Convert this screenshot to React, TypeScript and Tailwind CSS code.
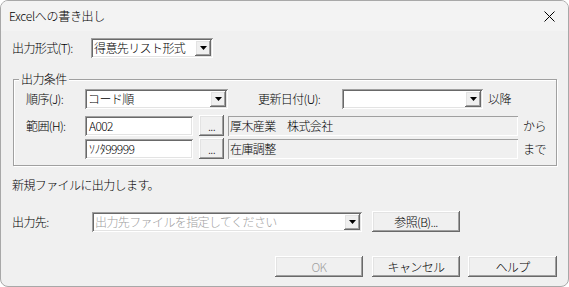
import React from "react";

const font = "font-['Noto_Sans_CJK_JP',sans-serif]";
const sunken =
	"bg-white shadow-[inset_1px_1px_0_#a0a0a0,inset_-1px_-1px_0_#ffffff,inset_2px_2px_0_#696969,inset_-2px_-2px_0_#e3e3e3]";
const raised =
	"bg-[#f0f0f0] shadow-[inset_-1px_-1px_0_#696969,inset_1px_1px_0_#ffffff,inset_-2px_-2px_0_#a0a0a0,inset_2px_2px_0_#e3e3e3]";
const staticBox = "shadow-[inset_1px_1px_0_#a0a0a0,inset_-1px_-1px_0_#ffffff]";

function DropButton() {
	return (
		<div className={`${raised} w-[16px] h-[16px] shrink-0 flex items-center justify-center`}>
			<svg width="7" height="4" viewBox="0 0 7 4">
				<path d="M0 0h7L3.5 4z" fill="#000" />
			</svg>
		</div>
	);
}

function Combo({ value, width, muted }: { value: string; width: string; muted?: boolean }) {
	return (
		<div className={`${sunken} ${width} h-[20px] flex items-center pl-[3px] pr-[2px]`}>
			<span className={`flex-1 whitespace-nowrap leading-[16px] ${muted ? "text-[#a0a0a0]" : "text-black"}`}>
				{value}
			</span>
			<DropButton />
		</div>
	);
}

function Edit({ value }: { value: string }) {
	return (
		<div className={`${sunken} w-[108px] h-[20px] flex items-center pl-[4px] leading-[16px]`}>
			{value}
		</div>
	);
}

function Button({ label, width, disabled }: { label: string; width: string; disabled?: boolean }) {
	return (
		<div
			className={`${raised} ${width} h-[21px] flex items-center justify-center leading-[16px] ${
				disabled ? "text-[#a0a0a0]" : "text-black"
			}`}
		>
			{label}
		</div>
	);
}

export default function App() {
	return (
		<div className={`w-[569px] h-[287px] bg-white text-[12px] text-black font-light ${font}`}>
			<div className="w-[569px] h-[287px] rounded-[8px] border border-[#a8a8a8] bg-[#f0f0f0] overflow-hidden flex flex-col">
				{/* title bar */}
				<div className="h-[30px] shrink-0 bg-[#f3f3f3] flex items-center justify-between pl-[8px] pr-[13px]">
					<span className="text-[12px] tracking-[-0.3px]">Excelへの書き出し</span>
					<svg width="11" height="11" viewBox="0 0 11 11">
						<path d="M0.5 0.5L10.5 10.5M10.5 0.5L0.5 10.5" stroke="#000" strokeWidth="1" />
					</svg>
				</div>

				<div className="flex flex-col pl-[11px] tracking-[-0.6px]">
					<div className="mt-[7px] flex items-center h-[20px]">
						<span className="w-[79px]">出力形式(T):</span>
						<Combo value="得意先リスト形式" width="w-[122px]" />
					</div>

					{/* group box */}
					<div className="relative mt-[21px] ml-[1px] w-[544px] h-[87px] border border-[#a0a0a0] shadow-[inset_1px_1px_0_#fff,1px_1px_0_#fff] pl-[12px]">
						<span className="absolute -top-[9px] left-[5px] bg-[#f0f0f0] px-[2px] leading-[16px]">
							出力条件
						</span>
						<div className="mt-[9px] flex items-center h-[20px]">
							<span className="w-[59px]">順序(J):</span>
							<Combo value="コード順" width="w-[143px]" />
							<span className="ml-[30px] w-[84px]">更新日付(U):</span>
							<Combo value="" width="w-[141px]" />
							<span className="ml-[5px]">以降</span>
						</div>
						<div className="mt-[6px] flex items-center h-[21px]">
							<span className="w-[59px]">範囲(H):</span>
							<Edit value="A002" />
							<div className="ml-[6px]">
								<Button label="..." width="w-[25px]" />
							</div>
							<div className={`${staticBox} ml-[4px] w-[290px] h-[20px] flex items-center pl-[2px] leading-[16px]`}>
								厚木産業　株式会社
							</div>
							<span className="ml-[5px]">から</span>
						</div>
						<div className="mt-[2px] flex items-center h-[21px]">
							<span className="w-[59px]" />
							<Edit value="ｿﾉﾀ99999" />
							<div className="ml-[6px]">
								<Button label="..." width="w-[25px]" />
							</div>
							<div className={`${staticBox} ml-[4px] w-[290px] h-[20px] flex items-center pl-[2px] leading-[16px]`}>
								在庫調整
							</div>
							<span className="ml-[5px]">まで</span>
						</div>
					</div>

					<div className="mt-[11px] h-[16px] leading-[16px]">新規ファイルに出力します。</div>

					<div className="mt-[18px] flex items-center h-[21px]">
						<span className="w-[80px]">出力先:</span>
						<Combo value="出力先ファイルを指定してください" width="w-[270px]" muted />
						<div className="ml-[10px]">
							<Button label="参照(B)..." width="w-[88px]" />
						</div>
					</div>

					<div className="mt-[24px] flex items-center ml-[263px]">
						<Button label="OK" width="w-[88px]" disabled />
						<div className="ml-[9px]">
							<Button label="キャンセル" width="w-[88px]" />
						</div>
						<div className="ml-[8px]">
							<Button label="ヘルプ" width="w-[89px]" />
						</div>
					</div>
				</div>
			</div>
		</div>
	);
}
